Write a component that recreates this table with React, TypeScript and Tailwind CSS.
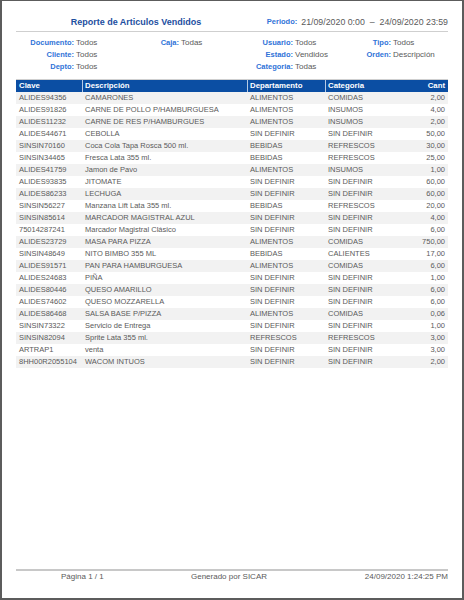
const rows: [string, string, string, string, string][] = [
  ["ALIDES94356", "CAMARONES", "ALIMENTOS", "COMIDAS", "2,00"],
  ["ALIDES91826", "CARNE DE POLLO P/HAMBURGUESA", "ALIMENTOS", "INSUMOS", "4,00"],
  ["ALIDES11232", "CARNE DE RES P/HAMBURGUES", "ALIMENTOS", "INSUMOS", "2,00"],
  ["ALIDES44671", "CEBOLLA", "SIN DEFINIR", "SIN DEFINIR", "50,00"],
  ["SINSIN70160", "Coca Cola Tapa Rosca 500 ml.", "BEBIDAS", "REFRESCOS", "30,00"],
  ["SINSIN34465", "Fresca Lata 355 ml.", "BEBIDAS", "REFRESCOS", "25,00"],
  ["ALIDES41759", "Jamon de Pavo", "ALIMENTOS", "INSUMOS", "1,00"],
  ["ALIDES93835", "JITOMATE", "SIN DEFINIR", "SIN DEFINIR", "60,00"],
  ["ALIDES86233", "LECHUGA", "SIN DEFINIR", "SIN DEFINIR", "60,00"],
  ["SINSIN56227", "Manzana Lift Lata 355 ml.", "BEBIDAS", "REFRESCOS", "20,00"],
  ["SINSIN85614", "MARCADOR MAGISTRAL AZUL", "SIN DEFINIR", "SIN DEFINIR", "4,00"],
  ["75014287241", "Marcador Magistral Clásico", "SIN DEFINIR", "SIN DEFINIR", "6,00"],
  ["ALIDES23729", "MASA PARA PIZZA", "ALIMENTOS", "COMIDAS", "750,00"],
  ["SINSIN48649", "NITO BIMBO 355 ML", "BEBIDAS", "CALIENTES", "17,00"],
  ["ALIDES91571", "PAN PARA HAMBURGUESA", "ALIMENTOS", "COMIDAS", "6,00"],
  ["ALIDES24683", "PIÑA", "SIN DEFINIR", "SIN DEFINIR", "1,00"],
  ["ALIDES80446", "QUESO AMARILLO", "SIN DEFINIR", "SIN DEFINIR", "6,00"],
  ["ALIDES74602", "QUESO MOZZARELLA", "SIN DEFINIR", "SIN DEFINIR", "6,00"],
  ["ALIDES86468", "SALSA BASE P/PIZZA", "ALIMENTOS", "COMIDAS", "0,06"],
  ["SINSIN73322", "Servicio de Entrega", "SIN DEFINIR", "SIN DEFINIR", "1,00"],
  ["SINSIN82094", "Sprite Lata 355 ml.", "REFRESCOS", "REFRESCOS", "3,00"],
  ["ARTRAP1", "venta", "SIN DEFINIR", "SIN DEFINIR", "3,00"],
  ["8HH00R2055104", "WACOM INTUOS", "SIN DEFINIR", "SIN DEFINIR", "2,00"],
]

function Filter({ label, value, labelWidth }: { label: string; value: string; labelWidth: string }) {
  return (
    <div className="flex h-[12px] items-center whitespace-nowrap">
      <span className={`${labelWidth} text-right text-[7.5px] font-bold text-[#2f73d8]`}>{label}:</span>
      <span className="pl-[2px] text-[8px] text-[#5a5a5a]">{value}</span>
    </div>
  )
}

export default function App() {
  return (
    <div
      className="flex h-[600px] w-[464px] flex-col border-t border-r-2 border-b-2 border-l-2 border-[#5c5c5c] bg-white px-[14px]"
      style={{ fontFamily: '"Liberation Sans", Arial, sans-serif' }}
    >
      {/* title */}
      <div className="flex items-center border-b border-[#cfcfcf] pt-[15px] pb-[3px]">
        <div className="w-[240px] text-center text-[9px] leading-[12px] font-bold text-[#1d4f9f]">
          Reporte de Articulos Vendidos
        </div>
        <div className="flex flex-1 items-center justify-end whitespace-nowrap leading-[12px]">
          <span className="text-[7.5px] font-bold text-[#2f73d8]">Periodo:</span>
          <span className="pl-[4px] text-[8.8px] text-[#5a5a5a]">
            21/09/2020 0:00 &nbsp;– &nbsp;24/09/2020 23:59
          </span>
        </div>
      </div>

      {/* filters */}
      <div className="flex border-b border-[#cfcfcf] pt-[5px] pb-[6px]">
        <div className="w-[120px]">
          <Filter label="Documento" value="Todos" labelWidth="w-[58px]" />
          <Filter label="Cliente" value="Todos" labelWidth="w-[58px]" />
          <Filter label="Depto" value="Todos" labelWidth="w-[58px]" />
        </div>
        <div className="w-[96px]">
          <Filter label="Caja" value="Todas" labelWidth="w-[43px]" />
        </div>
        <div className="w-[118px]">
          <Filter label="Usuario" value="Todos" labelWidth="w-[61px]" />
          <Filter label="Estado" value="Vendidos" labelWidth="w-[61px]" />
          <Filter label="Categoria" value="Todas" labelWidth="w-[61px]" />
        </div>
        <div className="flex-1">
          <Filter label="Tipo" value="Todos" labelWidth="w-[41px]" />
          <Filter label="Orden" value="Descripción" labelWidth="w-[41px]" />
        </div>
      </div>

      {/* table */}
      <div className="flex h-[12px] items-center bg-[#0b4ea3] text-[7.8px] font-bold text-white">
        <div className="w-[66px] pl-[3px]">Clave</div>
        <div className="h-full w-[165px] border-l border-white/70 pl-[2px] leading-[12px]">Descripción</div>
        <div className="h-full w-[78px] border-l border-white/70 pl-[2px] leading-[12px]">Departamento</div>
        <div className="h-full flex-1 border-l border-white/70 pl-[2px] leading-[12px]">Categoria</div>
        <div className="pr-[3px]">Cant</div>
      </div>
      <div className="flex flex-col">
        {rows.map((r, i) => (
          <div
            key={r[0]}
            className={`flex h-[12px] items-center whitespace-nowrap text-[7.5px] text-[#5a5a5a] ${
              i % 2 === 0 ? "bg-[#f2f2f2]" : "bg-white"
            }`}
          >
            <div className="w-[66px] pl-[3px]">{r[0]}</div>
            <div className="w-[165px] pl-[3px]">{r[1]}</div>
            <div className="w-[78px] pl-[3px]">{r[2]}</div>
            <div className="w-[75px] pl-[3px]">{r[3]}</div>
            <div className="flex-1 pr-[3px] text-right">{r[4]}</div>
          </div>
        ))}
      </div>

      <div className="flex-1" />

      {/* footer */}
      <div className="grid grid-cols-3 border-t-2 border-[#c8c8c8] pb-[15px] text-[8px] leading-[12px] text-[#5a5a5a]">
        <div className="pl-[45px]">Página 1 / 1</div>
        <div className="pr-[6px] text-center">Generado por SICAR</div>
        <div className="text-right">24/09/2020 1:24:25 PM</div>
      </div>
    </div>
  )
}
